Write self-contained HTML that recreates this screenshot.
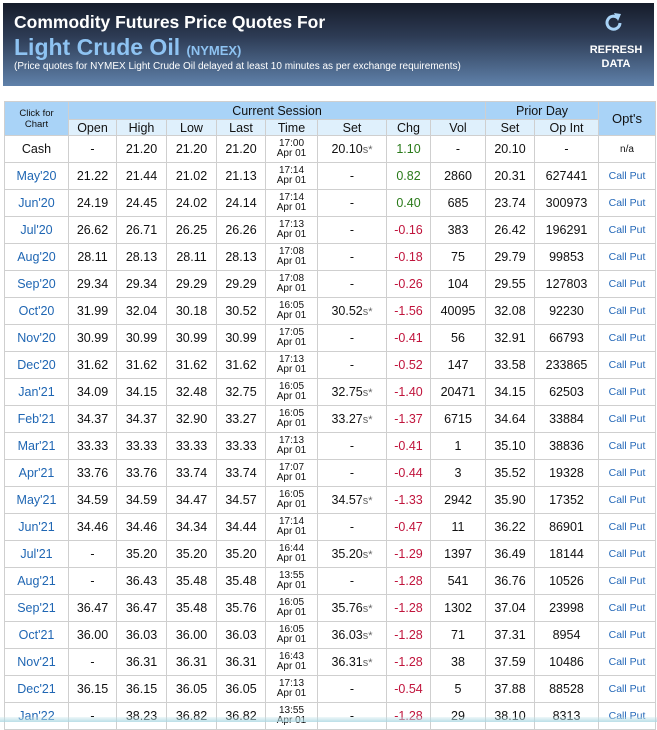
<!DOCTYPE html>
<html><head><meta charset="utf-8"><style>
body{margin:0;width:657px;height:722px;overflow:hidden;background:#fff;font-family:"Liberation Sans",Arial,sans-serif;position:relative}
.hd{position:absolute;left:3px;top:3px;width:651px;height:83px;background:linear-gradient(#161c2a,#2d3b54 40%,#5f81aa)}
.t1{position:absolute;left:11px;top:9px;color:#fff;font-weight:bold;font-size:17.5px}
.t2{position:absolute;left:11px;top:31px;color:#8ec3f2;font-weight:bold;font-size:23px}
.t2 span{font-size:13px}
.t3{position:absolute;left:11px;top:58px;color:#fff;font-size:10px}
.rf{position:absolute;left:583px;top:40px;color:#fff;font-weight:bold;font-size:11px;text-align:center;line-height:14px;width:60px}
table{position:absolute;left:4px;top:101px;border-collapse:collapse;table-layout:fixed;width:651px}
td{border:1px solid #cfcfcf;text-align:center;font-size:12.5px;color:#111;padding:0;height:26px;white-space:nowrap;overflow:hidden}
.h1 td{background:#a9d3f7;height:17px;font-size:12.5px}
.h2 td{background:#dff0fc;height:15px;font-size:12.5px}
td.ck{background:#a9d3f7;font-size:9.5px;line-height:11px}
td.op{background:#a9d3f7;font-size:13px}
.m{color:#1f66b3}
.tm{font-size:10px;line-height:10px}
.g{color:#2a7a1a}.r{color:#c0143c}
.cp{color:#2468b8;font-size:10.5px}
.s{font-size:12.5px}.s i{font-style:normal;color:#666;font-size:11px}
</style></head><body>
<div class="hd">
<div class="t1">Commodity Futures Price Quotes For</div>
<div class="t2">Light Crude Oil <span>(NYMEX)</span></div>
<div class="t3">(Price quotes for NYMEX Light Crude Oil delayed at least 10 minutes as per exchange requirements)</div>
<svg style="position:absolute;left:601px;top:8px" width="20" height="22" viewBox="0 0 20 22"><path d="M14 7 A6.5 6.5 0 1 0 16 12" fill="none" stroke="#a9d3f7" stroke-width="3"/><path d="M10 2 L17 3 L14 10 Z" fill="#a9d3f7"/></svg>
<div class="rf">REFRESH<br>DATA</div>
</div>
<table>
<colgroup><col style="width:64px"><col style="width:48px"><col style="width:50px"><col style="width:50px"><col style="width:49px"><col style="width:52px"><col style="width:69px"><col style="width:44px"><col style="width:55px"><col style="width:49px"><col style="width:64px"><col style="width:57px"></colgroup>
<tr class="h1"><td class="ck" rowspan="2">Click for<br>Chart</td><td colspan="8">Current Session</td><td colspan="2">Prior Day</td><td class="op" rowspan="2">Opt's</td></tr>
<tr class="h2"><td>Open</td><td>High</td><td>Low</td><td>Last</td><td>Time</td><td>Set</td><td>Chg</td><td>Vol</td><td>Set</td><td>Op Int</td></tr>
<tr><td>Cash</td><td>-</td><td>21.20</td><td>21.20</td><td>21.20</td><td class="tm">17:00<br>Apr 01</td><td class="s">20.10<i>s*</i></td><td class="g">1.10</td><td>-</td><td>20.10</td><td>-</td><td style="font-size:10px">n/a</td></tr>
<tr><td class="m">May'20</td><td>21.22</td><td>21.44</td><td>21.02</td><td>21.13</td><td class="tm">17:14<br>Apr 01</td><td>-</td><td class="g">0.82</td><td>2860</td><td>20.31</td><td>627441</td><td class="cp">Call Put</td></tr>
<tr><td class="m">Jun'20</td><td>24.19</td><td>24.45</td><td>24.02</td><td>24.14</td><td class="tm">17:14<br>Apr 01</td><td>-</td><td class="g">0.40</td><td>685</td><td>23.74</td><td>300973</td><td class="cp">Call Put</td></tr>
<tr><td class="m">Jul'20</td><td>26.62</td><td>26.71</td><td>26.25</td><td>26.26</td><td class="tm">17:13<br>Apr 01</td><td>-</td><td class="r">-0.16</td><td>383</td><td>26.42</td><td>196291</td><td class="cp">Call Put</td></tr>
<tr><td class="m">Aug'20</td><td>28.11</td><td>28.13</td><td>28.11</td><td>28.13</td><td class="tm">17:08<br>Apr 01</td><td>-</td><td class="r">-0.18</td><td>75</td><td>29.79</td><td>99853</td><td class="cp">Call Put</td></tr>
<tr><td class="m">Sep'20</td><td>29.34</td><td>29.34</td><td>29.29</td><td>29.29</td><td class="tm">17:08<br>Apr 01</td><td>-</td><td class="r">-0.26</td><td>104</td><td>29.55</td><td>127803</td><td class="cp">Call Put</td></tr>
<tr><td class="m">Oct'20</td><td>31.99</td><td>32.04</td><td>30.18</td><td>30.52</td><td class="tm">16:05<br>Apr 01</td><td class="s">30.52<i>s*</i></td><td class="r">-1.56</td><td>40095</td><td>32.08</td><td>92230</td><td class="cp">Call Put</td></tr>
<tr><td class="m">Nov'20</td><td>30.99</td><td>30.99</td><td>30.99</td><td>30.99</td><td class="tm">17:05<br>Apr 01</td><td>-</td><td class="r">-0.41</td><td>56</td><td>32.91</td><td>66793</td><td class="cp">Call Put</td></tr>
<tr><td class="m">Dec'20</td><td>31.62</td><td>31.62</td><td>31.62</td><td>31.62</td><td class="tm">17:13<br>Apr 01</td><td>-</td><td class="r">-0.52</td><td>147</td><td>33.58</td><td>233865</td><td class="cp">Call Put</td></tr>
<tr><td class="m">Jan'21</td><td>34.09</td><td>34.15</td><td>32.48</td><td>32.75</td><td class="tm">16:05<br>Apr 01</td><td class="s">32.75<i>s*</i></td><td class="r">-1.40</td><td>20471</td><td>34.15</td><td>62503</td><td class="cp">Call Put</td></tr>
<tr><td class="m">Feb'21</td><td>34.37</td><td>34.37</td><td>32.90</td><td>33.27</td><td class="tm">16:05<br>Apr 01</td><td class="s">33.27<i>s*</i></td><td class="r">-1.37</td><td>6715</td><td>34.64</td><td>33884</td><td class="cp">Call Put</td></tr>
<tr><td class="m">Mar'21</td><td>33.33</td><td>33.33</td><td>33.33</td><td>33.33</td><td class="tm">17:13<br>Apr 01</td><td>-</td><td class="r">-0.41</td><td>1</td><td>35.10</td><td>38836</td><td class="cp">Call Put</td></tr>
<tr><td class="m">Apr'21</td><td>33.76</td><td>33.76</td><td>33.74</td><td>33.74</td><td class="tm">17:07<br>Apr 01</td><td>-</td><td class="r">-0.44</td><td>3</td><td>35.52</td><td>19328</td><td class="cp">Call Put</td></tr>
<tr><td class="m">May'21</td><td>34.59</td><td>34.59</td><td>34.47</td><td>34.57</td><td class="tm">16:05<br>Apr 01</td><td class="s">34.57<i>s*</i></td><td class="r">-1.33</td><td>2942</td><td>35.90</td><td>17352</td><td class="cp">Call Put</td></tr>
<tr><td class="m">Jun'21</td><td>34.46</td><td>34.46</td><td>34.34</td><td>34.44</td><td class="tm">17:14<br>Apr 01</td><td>-</td><td class="r">-0.47</td><td>11</td><td>36.22</td><td>86901</td><td class="cp">Call Put</td></tr>
<tr><td class="m">Jul'21</td><td>-</td><td>35.20</td><td>35.20</td><td>35.20</td><td class="tm">16:44<br>Apr 01</td><td class="s">35.20<i>s*</i></td><td class="r">-1.29</td><td>1397</td><td>36.49</td><td>18144</td><td class="cp">Call Put</td></tr>
<tr><td class="m">Aug'21</td><td>-</td><td>36.43</td><td>35.48</td><td>35.48</td><td class="tm">13:55<br>Apr 01</td><td>-</td><td class="r">-1.28</td><td>541</td><td>36.76</td><td>10526</td><td class="cp">Call Put</td></tr>
<tr><td class="m">Sep'21</td><td>36.47</td><td>36.47</td><td>35.48</td><td>35.76</td><td class="tm">16:05<br>Apr 01</td><td class="s">35.76<i>s*</i></td><td class="r">-1.28</td><td>1302</td><td>37.04</td><td>23998</td><td class="cp">Call Put</td></tr>
<tr><td class="m">Oct'21</td><td>36.00</td><td>36.03</td><td>36.00</td><td>36.03</td><td class="tm">16:05<br>Apr 01</td><td class="s">36.03<i>s*</i></td><td class="r">-1.28</td><td>71</td><td>37.31</td><td>8954</td><td class="cp">Call Put</td></tr>
<tr><td class="m">Nov'21</td><td>-</td><td>36.31</td><td>36.31</td><td>36.31</td><td class="tm">16:43<br>Apr 01</td><td class="s">36.31<i>s*</i></td><td class="r">-1.28</td><td>38</td><td>37.59</td><td>10486</td><td class="cp">Call Put</td></tr>
<tr><td class="m">Dec'21</td><td>36.15</td><td>36.15</td><td>36.05</td><td>36.05</td><td class="tm">17:13<br>Apr 01</td><td>-</td><td class="r">-0.54</td><td>5</td><td>37.88</td><td>88528</td><td class="cp">Call Put</td></tr>
<tr><td class="m">Jan'22</td><td>-</td><td>38.23</td><td>36.82</td><td>36.82</td><td class="tm">13:55<br>Apr 01</td><td>-</td><td class="r">-1.28</td><td>29</td><td>38.10</td><td>8313</td><td class="cp">Call Put</td></tr>
</table>
<div style="position:absolute;left:0;top:717px;width:657px;height:5px;background:linear-gradient(rgba(200,230,235,0.3),rgba(170,215,225,0.8))"></div>
</body></html>
